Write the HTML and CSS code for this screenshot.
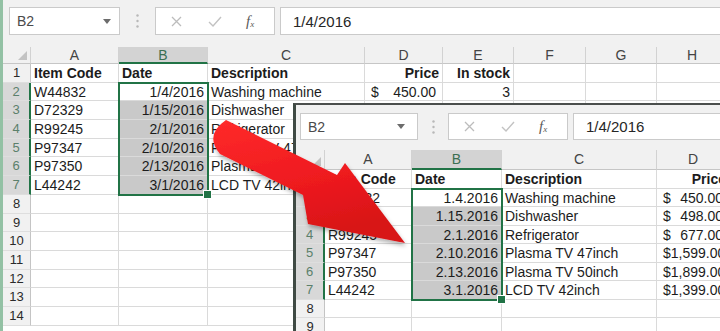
FILE: index.html
```html
<!DOCTYPE html>
<html>
<head>
<meta charset="utf-8">
<link rel="stylesheet" href="styles.css">
</head>
<body>
<div class="stage">
  <section class="sheet main">
    <div class="fbar">
      <div class="namebox"><span>B2</span><svg class="caret" viewBox="0 0 8 5"><path d="M0 0h8L4 5z"/></svg></div>
      <div class="grip"><svg viewBox="0 0 3 14"><circle cx="1.5" cy="1.5" r="1.2"/><circle cx="1.5" cy="7" r="1.2"/><circle cx="1.5" cy="12.5" r="1.2"/></svg></div>
      <div class="fbtns">
        <svg class="ic-x" viewBox="0 0 11 11"><path d="M1 1l9 9M10 1L1 10"/></svg>
        <svg class="ic-ok" viewBox="0 0 14 11"><path d="M1 6l4 4L13 1"/></svg>
        <span class="fx"><i>f</i><sub>x</sub></span>
      </div>
      <div class="finput">1/4/2016</div>
    </div>
    <div class="grid">
      <div class="row head"><div class="rh corner"><svg viewBox="0 0 10 10"><path d="M10 0v10H0z"/></svg></div><div>A</div><div class="on">B</div><div>C</div><div>D</div><div>E</div><div>F</div><div>G</div><div>H</div></div>
      <div class="row"><div class="rh">1</div><div class="b">Item Code</div><div class="b">Date</div><div class="b">Description</div><div class="b r">Price</div><div class="b r">In stock</div><div></div><div></div><div></div></div>
      <div class="row"><div class="rh on">2</div><div>W44832</div><div class="r">1/4/2016</div><div>Washing machine</div><div class="acct"><span>$</span><span>450.00</span></div><div class="r">3</div><div></div><div></div><div></div></div>
      <div class="row"><div class="rh on">3</div><div>D72329</div><div class="r sel">1/15/2016</div><div>Dishwasher</div><div class="acct"><span>$</span><span>498.00</span></div><div></div><div></div><div></div><div></div></div>
      <div class="row"><div class="rh on">4</div><div>R99245</div><div class="r sel">2/1/2016</div><div>Refrigerator</div><div class="acct"><span>$</span><span>677.00</span></div><div></div><div></div><div></div><div></div></div>
      <div class="row"><div class="rh on">5</div><div>P97347</div><div class="r sel">2/10/2016</div><div>Plasma TV 47inch</div><div class="acct"><span>$</span><span>1,599.00</span></div><div></div><div></div><div></div><div></div></div>
      <div class="row"><div class="rh on">6</div><div>P97350</div><div class="r sel">2/13/2016</div><div>Plasma TV 50inch</div><div class="acct"><span>$</span><span>1,899.00</span></div><div></div><div></div><div></div><div></div></div>
      <div class="row"><div class="rh on">7</div><div>L44242</div><div class="r sel">3/1/2016</div><div>LCD TV 42inch</div><div class="acct"><span>$</span><span>1,399.00</span></div><div></div><div></div><div></div><div></div></div>
      <div class="row"><div class="rh">8</div><div></div><div></div><div></div><div></div><div></div><div></div><div></div><div></div></div>
      <div class="row"><div class="rh">9</div><div></div><div></div><div></div><div></div><div></div><div></div><div></div><div></div></div>
      <div class="row"><div class="rh">10</div><div></div><div></div><div></div><div></div><div></div><div></div><div></div><div></div></div>
      <div class="row"><div class="rh">11</div><div></div><div></div><div></div><div></div><div></div><div></div><div></div><div></div></div>
      <div class="row"><div class="rh">12</div><div></div><div></div><div></div><div></div><div></div><div></div><div></div><div></div></div>
      <div class="row"><div class="rh">13</div><div></div><div></div><div></div><div></div><div></div><div></div><div></div><div></div></div>
      <div class="row"><div class="rh">14</div><div></div><div></div><div></div><div></div><div></div><div></div><div></div><div></div></div>
      <div class="selbox"></div>
    </div>
  </section>

  <section class="sheet over">
    <div class="fbar">
      <div class="namebox"><span>B2</span><svg class="caret" viewBox="0 0 8 5"><path d="M0 0h8L4 5z"/></svg></div>
      <div class="grip"><svg viewBox="0 0 3 14"><circle cx="1.5" cy="1.5" r="1.2"/><circle cx="1.5" cy="7" r="1.2"/><circle cx="1.5" cy="12.5" r="1.2"/></svg></div>
      <div class="fbtns">
        <svg class="ic-x" viewBox="0 0 11 11"><path d="M1 1l9 9M10 1L1 10"/></svg>
        <svg class="ic-ok" viewBox="0 0 14 11"><path d="M1 6l4 4L13 1"/></svg>
        <span class="fx"><i>f</i><sub>x</sub></span>
      </div>
      <div class="finput">1/4/2016</div>
    </div>
    <div class="grid">
      <div class="row head"><div class="rh corner"><svg viewBox="0 0 10 10"><path d="M10 0v10H0z"/></svg></div><div>A</div><div class="on">B</div><div>C</div><div>D</div></div>
      <div class="row"><div class="rh">1</div><div class="b">Item Code</div><div class="b">Date</div><div class="b">Description</div><div class="b r">Price</div></div>
      <div class="row"><div class="rh on">2</div><div>W44832</div><div class="r">1.4.2016</div><div>Washing machine</div><div class="acct"><span>$</span><span>450.00</span></div></div>
      <div class="row"><div class="rh on">3</div><div>D72329</div><div class="r sel">1.15.2016</div><div>Dishwasher</div><div class="acct"><span>$</span><span>498.00</span></div></div>
      <div class="row"><div class="rh on">4</div><div>R99245</div><div class="r sel">2.1.2016</div><div>Refrigerator</div><div class="acct"><span>$</span><span>677.00</span></div></div>
      <div class="row"><div class="rh on">5</div><div>P97347</div><div class="r sel">2.10.2016</div><div>Plasma TV 47inch</div><div class="acct"><span>$</span><span>1,599.00</span></div></div>
      <div class="row"><div class="rh on">6</div><div>P97350</div><div class="r sel">2.13.2016</div><div>Plasma TV 50inch</div><div class="acct"><span>$</span><span>1,899.00</span></div></div>
      <div class="row"><div class="rh on">7</div><div>L44242</div><div class="r sel">3.1.2016</div><div>LCD TV 42inch</div><div class="acct"><span>$</span><span>1,399.00</span></div></div>
      <div class="row"><div class="rh">8</div><div></div><div></div><div></div><div></div></div>
      <div class="row"><div class="rh">9</div><div></div><div></div><div></div><div></div></div>
      <div class="selbox"></div>
    </div>
  </section>

  <svg class="arrow" viewBox="0 0 720 331">
    <defs>
      <linearGradient id="red" x1="0" y1="0" x2="0.35" y2="1">
        <stop offset="0" stop-color="#ff2a2a"/>
        <stop offset="0.6" stop-color="#ee1a1f"/>
        <stop offset="1" stop-color="#d81217"/>
      </linearGradient>
      <filter id="sh" x="-10%" y="-10%" width="130%" height="130%">
        <feDropShadow dx="1" dy="3" stdDeviation="2.2" flood-color="#000" flood-opacity="0.3"/>
      </filter>
    </defs>
    <path d="M226 120 L337 175 L345 163 L405 243 L308 224 L303 195 L220 154 Q204 135 226 120 Z" fill="url(#red)" filter="url(#sh)"/>
  </svg>
</div>
</body>
</html>
```

FILE: styles.css
```css
* {
  box-sizing: border-box;
  margin: 0;
  padding: 0;
}

html, body {
  width: 720px;
  height: 331px;
  overflow: hidden;
  background: #ffffff;
}

body {
  font-family: "Liberation Sans", Arial, sans-serif;
  font-size: 14px;
  color: #1c1c1c;
}

.stage {
  position: relative;
  width: 720px;
  height: 331px;
  overflow: hidden;
}

.sheet {
  background: #ffffff;
  overflow: hidden;
}

.main {
  width: 720px;
  height: 331px;
  border-left: 3px solid #93c1a4;
  --rh: 18.7px;
  --hh: 17px;
  --cols: 28px 88px 89px 157px 78px 71px 72px 71px 71px;
  --selw: 91px;
}

.over {
  position: absolute;
  left: 293px;
  top: 103px;
  width: 437px;
  height: 230px;
  border-left: 3px solid #3f4a44;
  border-top: 2px solid #4b4f4d;
  --rh: 18.5px;
  --hh: 20px;
  --cols: 29px 87px 90px 155px 73px;
  --selw: 92px;
}

/* formula bar */
.fbar {
  display: flex;
  align-items: flex-start;
  background: #f1f1f1;
}

.main .fbar {
  height: 47px;
  padding: 7px 0 0 6px;
}

.over .fbar {
  height: 45px;
  padding: 8px 0 0 4px;
}

.namebox {
  display: flex;
  align-items: center;
  justify-content: space-between;
  background: #ffffff;
  border: 1px solid #cacaca;
  padding: 0 8px 0 7px;
  color: #4a4a4a;
  font-size: 14px;
}

.main .namebox {
  width: 111px;
  height: 28px;
}

.over .namebox {
  width: 118px;
  height: 27px;
  padding-right: 12px;
}

.caret {
  width: 8px;
  height: 5px;
  fill: #6c6c6c;
}

.grip {
  display: flex;
  justify-content: center;
  align-items: center;
}

.main .grip {
  width: 35px;
  height: 28px;
}

.over .grip {
  width: 30px;
  height: 27px;
}

.grip svg {
  width: 3px;
  height: 14px;
  fill: #b8b8b8;
}

.fbtns {
  width: 120px;
  display: flex;
  align-items: center;
  background: #ffffff;
  border: 1px solid #cacaca;
}

.main .fbtns {
  height: 28px;
}

.over .fbtns {
  height: 27px;
}

.ic-x {
  width: 11px;
  height: 11px;
  fill: none;
  stroke: #bcbcbc;
  stroke-width: 1.3;
  margin-left: 15px;
}

.ic-ok {
  width: 14px;
  height: 11px;
  fill: none;
  stroke: #c2c2c2;
  stroke-width: 1.4;
  margin-left: 26px;
}

.fx {
  margin-left: 24px;
  font-family: "Liberation Serif", "Times New Roman", serif;
  font-style: italic;
  font-size: 15px;
  color: #5a5a5a;
  line-height: 1;
}

.fx sub {
  font-size: 9px;
  vertical-align: -1px;
}

.finput {
  flex: 1;
  display: flex;
  align-items: center;
  margin-left: 5px;
  padding-left: 12px;
  background: #ffffff;
  border: 1px solid #cacaca;
  border-right: none;
  font-size: 15px;
  color: #262626;
}

.main .finput {
  height: 28px;
}

.over .finput {
  height: 27px;
}

/* grid */
.grid {
  position: relative;
}

.row {
  display: grid;
  grid-template-columns: var(--cols);
  height: var(--rh);
}

.row > div {
  border-right: 1px solid #dadada;
  border-bottom: 1px solid #dadada;
  white-space: nowrap;
  overflow: hidden;
  padding: 1px 3px 0 3px;
  line-height: calc(var(--rh) - 2px);
}

.row .rh {
  background: #f1f1f1;
  color: #2a2a2a;
  text-align: center;
  font-size: 13px;
  padding: 1px 0 0 0;
  border-right-color: #c4c4c4;
  border-bottom-color: #dedede;
}

.row .rh.on {
  background: #d8d8d8;
  color: #5b806b;
  border-right: 2px solid #217346;
}

.row.head {
  height: var(--hh);
}

.row.head > div {
  background: #f1f1f1;
  text-align: center;
  color: #444444;
  padding: 0;
  line-height: calc(var(--hh) - 1px);
  border-right-color: #d2d2d2;
  border-bottom-color: #c6c6c6;
}

.row.head > div.on {
  background: #d3d3d3;
  color: #3b6f52;
  border-bottom: 2px solid #217346;
}

.row.head .corner {
  display: flex;
  justify-content: flex-end;
  align-items: flex-end;
  padding: 0 3px 3px 0;
}

.corner svg {
  width: 9px;
  height: 9px;
  fill: #c3c3c3;
}

.b {
  font-weight: bold;
}

.r {
  text-align: right;
}

.row > .sel {
  background: #c9c9c9;
}

.row > .acct {
  display: flex;
  justify-content: space-between;
  padding: 1px 6px 0 6px;
}

.selbox {
  position: absolute;
  left: 115px;
  top: calc(var(--hh) + var(--rh) - 1px);
  width: var(--selw);
  height: calc(6 * var(--rh) + 2px);
  border: 2px solid #217346;
  pointer-events: none;
}

.selbox::after {
  content: "";
  position: absolute;
  right: -5px;
  bottom: -5px;
  width: 7px;
  height: 7px;
  background: #217346;
  border: 1px solid #ffffff;
}

.arrow {
  position: absolute;
  left: 0;
  top: 0;
  width: 720px;
  height: 331px;
  pointer-events: none;
}
```
